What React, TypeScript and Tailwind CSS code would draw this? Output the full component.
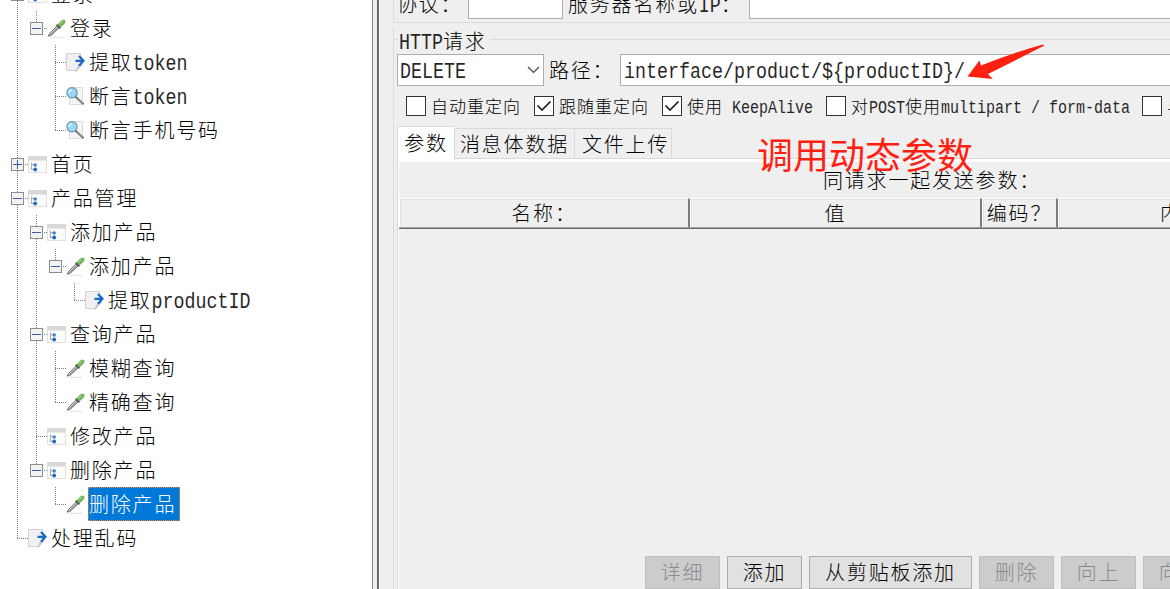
import clsx from "clsx";

type IconName = "controller" | "sampler" | "extractor" | "assertion";

// v: line passes through, t: branch, l: last branch, e: empty
type Guide = "v" | "t" | "l" | "e";

interface TreeItem {
  guides: Guide[];
  icon: IconName;
  label: string;
  toggle?: "plus" | "minus";
  selected?: boolean;
}

const tree: TreeItem[] = [
  { guides: ["t"], icon: "controller", label: "登录", toggle: "minus" },
  { guides: ["v", "l"], icon: "sampler", label: "登录", toggle: "minus" },
  { guides: ["v", "e", "t"], icon: "extractor", label: "提取token" },
  { guides: ["v", "e", "t"], icon: "assertion", label: "断言token" },
  { guides: ["v", "e", "l"], icon: "assertion", label: "断言手机号码" },
  { guides: ["t"], icon: "controller", label: "首页", toggle: "plus" },
  { guides: ["t"], icon: "controller", label: "产品管理", toggle: "minus" },
  { guides: ["v", "t"], icon: "controller", label: "添加产品", toggle: "minus" },
  { guides: ["v", "v", "l"], icon: "sampler", label: "添加产品", toggle: "minus" },
  { guides: ["v", "v", "e", "l"], icon: "extractor", label: "提取productID" },
  { guides: ["v", "t"], icon: "controller", label: "查询产品", toggle: "minus" },
  { guides: ["v", "v", "t"], icon: "sampler", label: "模糊查询" },
  { guides: ["v", "v", "l"], icon: "sampler", label: "精确查询" },
  { guides: ["v", "t"], icon: "controller", label: "修改产品" },
  { guides: ["v", "l"], icon: "controller", label: "删除产品", toggle: "minus" },
  { guides: ["v", "e", "l"], icon: "sampler", label: "删除产品", selected: true },
  { guides: ["l"], icon: "extractor", label: "处理乱码" },
];

const buttons = [
  { label: "详细", width: "w-[75px]", disabled: true },
  { label: "添加", width: "w-[75px]", disabled: false },
  { label: "从剪贴板添加", width: "w-[163px]", disabled: false },
  { label: "删除", width: "w-[75px]", disabled: true },
  { label: "向上", width: "w-[75px]", disabled: true },
  { label: "向下", width: "w-[75px]", disabled: true },
];

// Latin runs take half the advance of a Chinese character
function Txt({ children, small }: { children: string; small?: boolean }) {
  const runs = children.match(/[\x20-\x7e]+|[^\x20-\x7e]+/g) ?? [];
  return (
    <span
      className={clsx(
        "block font-['Noto_Sans_CJK_SC',sans-serif] font-light whitespace-pre",
        small ? "text-[17px] leading-[26px] tracking-[1px]" : "text-[20px] leading-[30px] tracking-[1.8px]"
      )}
    >
      {runs.map((run, i) =>
        /^[\x20-\x7e]/.test(run) ? (
          <span
            key={i}
            className={clsx(
              "inline-block origin-[50%_80%] scale-y-[1.18] font-['Liberation_Mono',monospace] leading-none tracking-normal opacity-85",
              small ? "text-[15px]" : "text-[18.33px]"
            )}
          >
            {run}
          </span>
        ) : (
          <span key={i}>{run}</span>
        )
      )}
    </span>
  );
}

function GuideCell({ type, toggle }: { type: Guide; toggle?: "plus" | "minus" }) {
  return (
    <svg width="19" height="34" className="shrink-0 overflow-visible" shapeRendering="crispEdges">
      {type !== "e" && (
        <line x1="9.5" x2="9.5" y1="0" y2={type === "l" ? 18 : 34} stroke="#808080" strokeDasharray="1 1" />
      )}
      {(type === "t" || type === "l") && (
        <line x1="9" x2="20" y1="17.5" y2="17.5" stroke="#808080" strokeDasharray="1 1" />
      )}
      {toggle && (
        <>
          <rect x="3.5" y="11.5" width="12" height="12" rx="1" fill="#f3f3f3" stroke="#8c8c8c" />
          <line x1="5" x2="14" y1="17.5" y2="17.5" stroke="#3c5aa6" />
          {toggle === "plus" && <line x1="9.5" x2="9.5" y1="13" y2="22" stroke="#3c5aa6" />}
        </>
      )}
    </svg>
  );
}

function NodeIcon({ name }: { name: IconName }) {
  return (
    <svg width="19" height="19" viewBox="0 0 19 19" className="shrink-0">
      {name === "controller" && (
        <>
          <rect x="0.5" y="1.5" width="18" height="16" fill="#fbfbfb" stroke="#e0e0e0" />
          <rect x="0" y="1" width="19" height="4.5" fill="#d8d8d8" />
          <path d="M3.5 7.5V15M3.5 9.5H6M3.5 14.5H6" stroke="#a5adb8" fill="none" />
          <circle cx="7.2" cy="10" r="1.7" fill="#3b7fcc" />
          <circle cx="7.2" cy="14.5" r="1.9" fill="#2468be" />
        </>
      )}
      {name === "sampler" && (
        <>
          <path d="M3 18.3H16" stroke="#dedede" />
          <path d="M1.2 17.2L2.8 14.2L10.4 6.8L12.2 8.6L4.7 15.8Z" fill="#e2e4e3" stroke="#666b68" strokeWidth="1" />
          <path d="M3.6 15.8L11.4 8.2" stroke="#555" strokeWidth=".9" />
          <path d="M9.6 5.6L13.4 9.4" stroke="#3c4a39" strokeWidth="1.5" />
          <path d="M10.8 5.8L14.2 2Q16 .3 17.8 1.2Q19 2.7 17 4.8L13.3 8.2Z" fill="#72b55b" stroke="#5a9c44" strokeWidth=".6" />
          <path d="M12.8 5L15.8 2.1" stroke="#b3dda4" />
        </>
      )}
      {name === "extractor" && (
        <>
          <path d="M.5 .5H14.5V13L10.5 17.5H.5Z" fill="#f1f1f1" stroke="#d2d2d2" />
          <path d="M10 18.5L12.5 12.5L16 11.5Z" fill="#d8d8d8" stroke="#b5b5b5" strokeWidth=".7" />
          <path d="M9.5 7.8H17M13 3L17.5 7.8L13 12.8" stroke="#1769c8" strokeWidth="2.3" fill="none" />
        </>
      )}
      {name === "assertion" && (
        <>
          <path d="M3.5 .5H16.5V17.5H3.5Z" fill="#f5f5f5" stroke="#dcdcdc" />
          <path d="M9.5 9.7L17.6 17.2" stroke="#666" strokeWidth="1.9" />
          <path d="M11.2 11.2L16.8 16.4" stroke="#bdbdbd" strokeWidth=".7" />
          <circle cx="6" cy="5.8" r="5.1" fill="#9bd6f4" stroke="#6a93ae" strokeWidth="1.2" />
          <path d="M3 6Q3.3 3.2 6 2.9" stroke="#e4f7ff" strokeWidth="1.4" fill="none" />
        </>
      )}
    </svg>
  );
}

function TreeRow({ item }: { item: TreeItem }) {
  return (
    <div className="flex h-[34px] shrink-0 items-center">
      {item.guides.map((guide, i) => (
        <GuideCell key={i} type={guide} toggle={i === item.guides.length - 1 ? item.toggle : undefined} />
      ))}
      <div className="ml-px flex items-center gap-[3px]">
        <NodeIcon name={item.icon} />
        <span
          className={clsx(
            "flex h-[34px] items-center border border-dotted",
            item.selected ? "w-[92px] border-[#ff8728] bg-[#0078d7] text-white" : "border-transparent"
          )}
        >
          <Txt>{item.label}</Txt>
        </span>
      </div>
    </div>
  );
}

function Check({ label, checked, className }: { label: string; checked?: boolean; className: string }) {
  return (
    <label className={clsx("flex shrink-0 items-center gap-[5px]", className)}>
      <span className="flex size-5 shrink-0 items-center justify-center border border-[#333] bg-white">
        {checked && (
          <svg width="16" height="14" viewBox="0 0 16 14" fill="none" stroke="#222" strokeWidth="1.7">
            <path d="M1.5 6.5L6 11L14.5 2.5" />
          </svg>
        )}
      </span>
      <span className="mb-px">
        <Txt small>{label}</Txt>
      </span>
    </label>
  );
}

function HeaderCell({ label, className }: { label: string; className: string }) {
  return (
    <div
      className={clsx(
        "flex h-[30px] shrink-0 items-center justify-center border-t border-l border-r-2 border-t-white border-l-white border-r-[#7a7a7a] border-b border-b-[#a0a0a0] shadow-[inset_1px_1px_0_#e1e1e1]",
        className
      )}
    >
      <Txt>{label}</Txt>
    </div>
  );
}

export default function App() {
  return (
    <div className="relative flex h-[589px] w-[1170px] overflow-hidden bg-[#efefef] text-black">
      <aside className="flex w-[373px] shrink-0 flex-col overflow-hidden border-r border-[#828790] bg-white pl-2">
        <div className="-mt-[23px] flex flex-col">
          {tree.map((item, i) => (
            <TreeRow key={i} item={item} />
          ))}
        </div>
      </aside>
      <div className="ml-1 w-[3px] shrink-0 border-r border-l-2 border-l-[#696969] border-r-white" />

      <main className="flex min-w-0 flex-1 flex-col pl-[13px]">
        {/* Web server */}
        <section className="flex h-[23px] shrink-0 items-end overflow-hidden border-b border-l border-[#dcdcdc] pb-[3px] pl-[3px]">
          <div className="flex h-[31px] shrink-0 items-center">
            <span className="w-[71px]"><Txt>协议：</Txt></span>
            <span className="h-[31px] w-[95px] border border-[#abadb3] bg-white" />
            <span className="ml-[5px] w-[181px]"><Txt>服务器名称或IP：</Txt></span>
            <span className="h-[31px] w-[440px] border border-[#abadb3] bg-white" />
          </div>
        </section>

        {/* HTTP request */}
        <fieldset className="-mr-1 mt-[4px] flex min-w-0 flex-1 flex-col border-l border-[#dcdcdc] pl-[3px]">
          <div className="-ml-[3px] flex h-[27px] shrink-0 items-center">
            <span className="-mt-[3px] w-1 border-t border-[#dcdcdc]" />
            <span className="ml-px w-[91px]"><Txt>HTTP请求</Txt></span>
            <span className="-mt-[3px] flex-1 border-t border-[#dcdcdc]" />
          </div>
          <div className="flex h-8 shrink-0 items-center">
            <div className="flex h-8 w-[147px] items-center justify-between border border-[#abadb3] bg-white pr-[3px] pl-[2px]">
              <Txt>DELETE</Txt>
              <svg width="13" height="8" viewBox="0 0 13 8" fill="none" stroke="#444" strokeWidth="1.2">
                <path d="M1 1L6.5 6.5L12 1" />
              </svg>
            </div>
            <span className="ml-[5px] w-[71px]"><Txt>路径：</Txt></span>
            <div className="flex h-8 flex-1 items-center border border-[#abadb3] bg-white pl-[3px]">
              <Txt>{"interface/product/${productID}/"}</Txt>
            </div>
          </div>
          <div className="flex h-10 shrink-0 items-center overflow-hidden pl-[9px]">
            <Check label="自动重定向" className="w-[128px]" />
            <Check label="跟随重定向" checked className="w-[128px]" />
            <Check label="使用 KeepAlive" checked className="w-[164px]" />
            <Check label="对POST使用multipart / form-data" className="w-[316px]" />
            <Check label="与浏览器兼容的头" className="w-[200px]" />
          </div>

          <div className="flex h-[33px] shrink-0 items-end">
            <div className="flex h-[33px] w-[57px] items-center justify-center border-t border-l border-[#d9d9d9] bg-white pb-px">
              <Txt>参数</Txt>
            </div>
            <div className="flex h-[31px] w-[121px] items-center border border-[#d9d9d9] pt-px pl-[5px]">
              <Txt>消息体数据</Txt>
            </div>
            <div className="flex h-[31px] w-[97px] items-center border-y border-r border-[#d9d9d9] pt-px pl-[7px]">
              <Txt>文件上传</Txt>
            </div>
            <div className="flex-1 border-b border-[#d9d9d9]" />
          </div>
          <div className="flex min-h-0 flex-1 flex-col border-l border-[#d9d9d9]">
            <div className="flex min-h-0 flex-1 flex-col border-t-[3px] border-l border-white">
              <div className="flex h-9 shrink-0 items-center pl-[424px]">
                <Txt>同请求一起发送参数：</Txt>
              </div>
              <div className="flex h-[31px] shrink-0 overflow-hidden border-b border-[#696969]">
                <HeaderCell label="名称：" className="w-[291px]" />
                <HeaderCell label="值" className="w-[292px]" />
                <HeaderCell label="编码？" className="w-[76px]" />
                <HeaderCell label="内容类型" className="w-[292px]" />
              </div>
              <div className="flex-1" />
              <div className="flex shrink-0 gap-[7px] overflow-hidden pl-[246px]">
                {buttons.map((button) => (
                  <button
                    key={button.label}
                    disabled={button.disabled}
                    className={clsx(
                      "flex h-[33px] shrink-0 items-center justify-center border pb-px",
                      button.width,
                      button.disabled
                        ? "border-[#bfbfbf] bg-[#cccccc] text-[#8b8b8b]"
                        : "border-[#adadad] bg-[#e1e1e1]"
                    )}
                  >
                    <Txt>{button.label}</Txt>
                  </button>
                ))}
              </div>
            </div>
          </div>
        </fieldset>
      </main>

      {/* Annotations over the form */}
      <svg className="absolute top-[40px] left-[964px]" width="84" height="44" viewBox="0 0 84 44">
        <path d="M3.5 36.5L15.5 20.5L17 25.5Q48 13 79 4.5L80 5.8Q52 20 24 34L29 39Z" fill="#ff2012" />
      </svg>
      <span className="absolute top-[126px] left-[757px] font-['Noto_Sans_CJK_SC',sans-serif] text-[36px] leading-[54px] whitespace-nowrap text-[#ff2012]">
        调用动态参数
      </span>
    </div>
  );
}
